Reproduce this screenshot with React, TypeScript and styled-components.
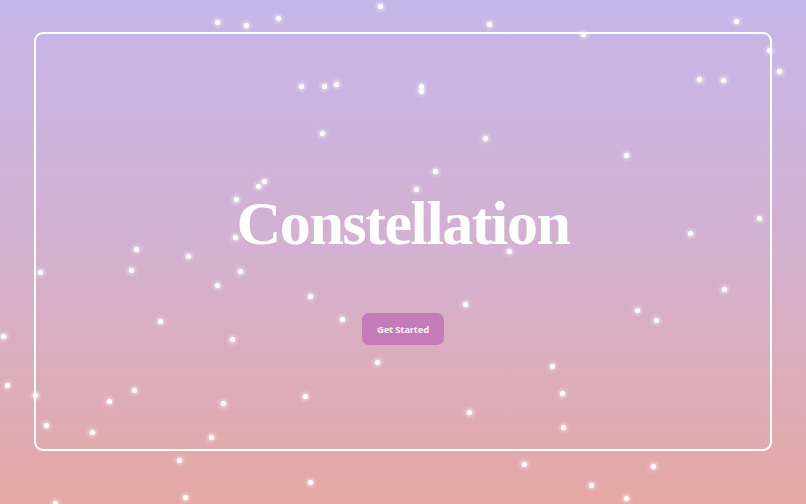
import styled, { createGlobalStyle } from "styled-components";

const GlobalStyle = createGlobalStyle`
  html, body {
    margin: 0;
    padding: 0;
  }
  body {
    font-family: "Open Sans", "Noto Sans", sans-serif;
  }
`;

// star positions in page pixels
const stars: [number, number][] = [
  [380, 6], [217, 22], [246, 25], [278, 18], [301, 86], [324, 86], [336, 84],
  [322, 133], [264, 181], [258, 186], [236, 199], [235, 237], [136, 249],
  [489, 24], [583, 34], [736, 21], [769, 50], [779, 71], [699, 79], [723, 80],
  [421, 86], [421, 91], [485, 138], [626, 155], [435, 171], [416, 189],
  [759, 218], [690, 233], [509, 251],
  [188, 256], [131, 270], [40, 272], [240, 271], [217, 285], [310, 296],
  [342, 319], [160, 321], [3, 336], [232, 339], [377, 362], [7, 385],
  [35, 395], [134, 390], [109, 401], [223, 403], [305, 396], [46, 425],
  [92, 432], [211, 437], [179, 460], [310, 482], [185, 497], [55, 503],
  [465, 304], [724, 289], [637, 310], [656, 320], [552, 366], [562, 393],
  [469, 412], [563, 427], [524, 464], [653, 466], [591, 485], [626, 498],
];

export default function App() {
  return (
    <>
      <GlobalStyle />
      <Page>
        <Sky>
          {stars.map(([x, y], i) => (
            <Star key={i} style={{ left: x - 2.5, top: y - 2.5 }} />
          ))}
        </Sky>
        <Frame>
          <Title>Constellation</Title>
          <StartButton>Get Started</StartButton>
        </Frame>
      </Page>
    </>
  );
}

const Page = styled.div`
  position: relative;
  height: 100vh;
  box-sizing: border-box;
  padding: 32px 34px 53px;
  overflow: hidden;
  background: linear-gradient(180deg, #c6b6e9 0%, #d3b1d0 50%, #e5a8a4 100%);
  display: flex;
`;

const Sky = styled.div`
  position: absolute;
  inset: 0;
  pointer-events: none;
`;

const Star = styled.span`
  position: absolute;
  width: 5px;
  height: 5px;
  border-radius: 50%;
  background: #ffffff;
  box-shadow: 0 0 4px 1px rgba(255, 255, 255, 0.75);
`;

const Frame = styled.div`
  position: relative;
  flex: 1;
  box-sizing: border-box;
  border: 2px solid #ffffff;
  border-radius: 9px;
  display: flex;
  flex-direction: column;
  align-items: center;
  justify-content: center;
  padding-top: 54px;
`;

const Title = styled.h1`
  margin: 0;
  font-family: "Liberation Serif", "Times New Roman", serif;
  font-weight: 700;
  font-size: 62px;
  line-height: 1;
  letter-spacing: -1.4px;
  color: #ffffff;
`;

const StartButton = styled.button`
  margin-top: 59px;
  width: 82px;
  height: 32px;
  border: none;
  border-radius: 7px;
  background: #c47cb9;
  color: #fcecf7;
  font-family: "Open Sans", "Noto Sans", sans-serif;
  font-weight: 700;
  font-size: 9.5px;
  letter-spacing: -0.2px;
  cursor: pointer;
`;
